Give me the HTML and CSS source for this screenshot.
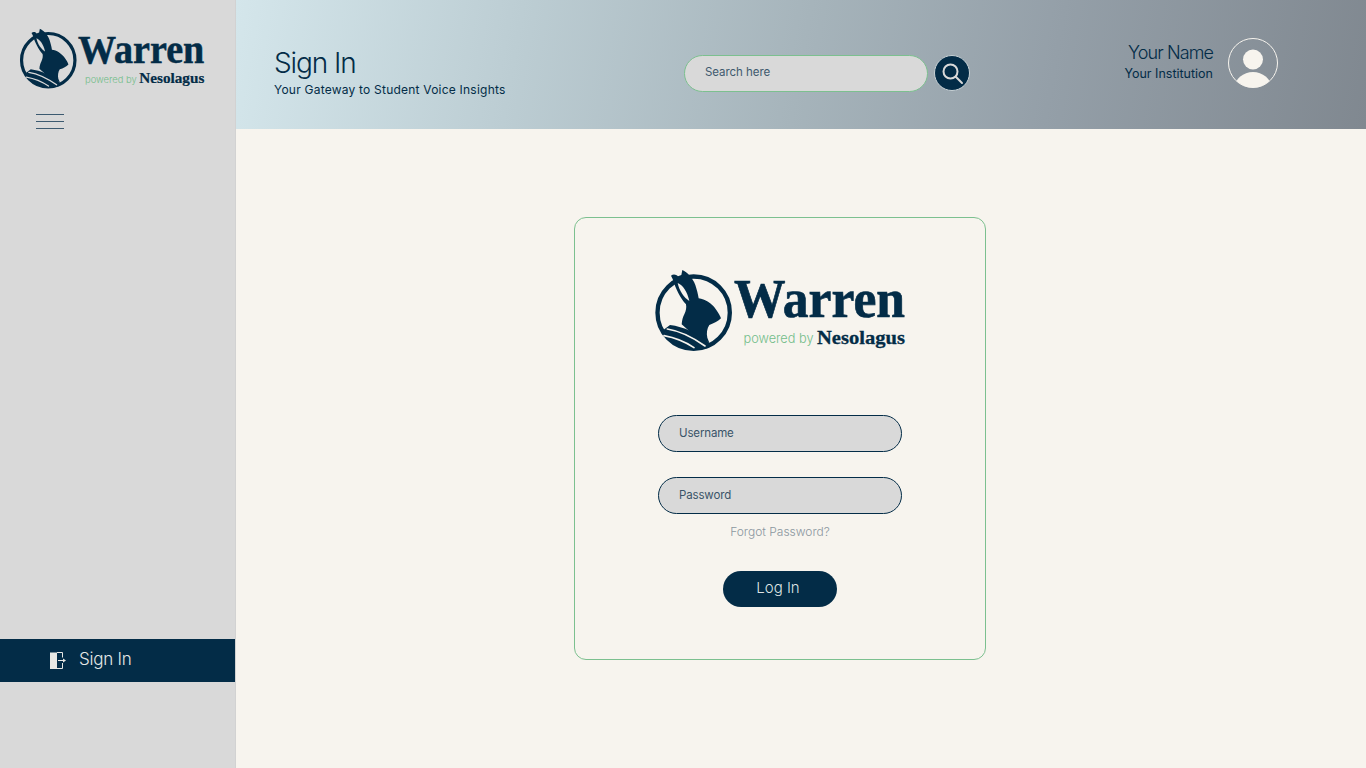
FILE: index.html
```html
<!DOCTYPE html>
<html lang="en">
<head>
<meta charset="utf-8">
<title>Warren - Sign In</title>
<link rel="stylesheet" href="styles.css">
</head>
<body>
<aside class="sidebar">
  <svg class="logo logo-small" viewBox="650 265 260 90" aria-label="Warren powered by Nesolagus">
    <g transform="translate(650 265) scale(.3333)">
      <circle class="ring" cx="131" cy="143" r="108.5"/>
      <path class="ink" d="M97 15 C112 22 128 38 136 60 C141 75 144 88 146 100 C165 102 185 115 197 132 C205 143 211 153 213 160 C205 168 192 175 178 180 C171 190 169 205 172 218 L178 233 L120 200 L95 178 C96 165 99 155 103 148 C108 138 110 128 108 118 C92 100 76 70 68 42 L63 32 C70 26 78 28 84 34 L94 30 Z"/>
      <path class="lens" d="M83 54 C98 60 112 80 118 108 C102 98 88 78 83 54 Z"/>
      <path class="ink" d="M60 180 C100 185 145 205 178 233 L172 250 L131 255 L80 240 C60 225 45 200 40 195 Z"/>
      <path class="gap" d="M52 192 C90 198 130 218 165 243"/>
      <path class="gap" d="M42 212 C75 218 105 230 132 248"/>
    </g>
    <text class="wordmark" x="734" y="317" textLength="171" lengthAdjust="spacingAndGlyphs">Warren</text>
    <text class="powered" x="743.5" y="343" textLength="70" lengthAdjust="spacingAndGlyphs">powered by</text>
    <text class="nesolagus" x="817" y="343.5" textLength="88" lengthAdjust="spacingAndGlyphs">Nesolagus</text>
  </svg>
  <div class="burger"><span></span><span></span><span></span></div>
  <a class="nav-item">
    <svg class="door" viewBox="0 0 16 17"><path class="door-fill" d="M0 .5 H7 V17 H0 Z"/><path class="door-line" d="M7 .5 H12.5 V5.5 M12.5 11 V16.5 H7 M8 8.5 H13"/><path class="door-fill" d="M13 6.5 L16 8.5 L13 10.5 Z"/></svg>
    <span>Sign In</span>
  </a>
</aside>
<div class="main">
  <header class="topbar">
    <div class="heading">
      <h1>Sign In</h1>
      <p>Your Gateway to Student Voice Insights</p>
    </div>
    <div class="search">
      <input class="search-input" placeholder="Search here">
      <button class="search-btn" aria-label="Search">
        <svg viewBox="0 0 24 24" width="24" height="24"><circle cx="10.5" cy="10.5" r="7"/><path d="M15.8 15.8 L22 22"/></svg>
      </button>
    </div>
    <div class="user">
      <div class="user-text">
        <div class="user-name">Your Name</div>
        <div class="user-inst">Your Institution</div>
      </div>
      <svg class="avatar" viewBox="0 0 50 52"><defs><clipPath id="av"><circle cx="25" cy="26" r="24.5"/></clipPath></defs><circle class="av-ring" cx="25" cy="26" r="24.5"/><g clip-path="url(#av)"><circle class="av-fill" cx="25" cy="22.5" r="10"/><ellipse class="av-fill" cx="25" cy="50" rx="18" ry="15"/></g></svg>
    </div>
  </header>
  <main class="content">
    <form class="card">
      <svg class="logo logo-large" viewBox="650 265 260 90" aria-label="Warren powered by Nesolagus">
        <g transform="translate(650 265) scale(.3333)">
          <circle class="ring" cx="131" cy="143" r="108.5"/>
          <path class="ink" d="M97 15 C112 22 128 38 136 60 C141 75 144 88 146 100 C165 102 185 115 197 132 C205 143 211 153 213 160 C205 168 192 175 178 180 C171 190 169 205 172 218 L178 233 L120 200 L95 178 C96 165 99 155 103 148 C108 138 110 128 108 118 C92 100 76 70 68 42 L63 32 C70 26 78 28 84 34 L94 30 Z"/>
          <path class="lens" d="M83 54 C98 60 112 80 118 108 C102 98 88 78 83 54 Z"/>
          <path class="ink" d="M60 180 C100 185 145 205 178 233 L172 250 L131 255 L80 240 C60 225 45 200 40 195 Z"/>
          <path class="gap" d="M52 192 C90 198 130 218 165 243"/>
          <path class="gap" d="M42 212 C75 218 105 230 132 248"/>
        </g>
        <text class="wordmark" x="734" y="317" textLength="171" lengthAdjust="spacingAndGlyphs">Warren</text>
        <text class="powered" x="743.5" y="343" textLength="70" lengthAdjust="spacingAndGlyphs">powered by</text>
        <text class="nesolagus" x="817" y="343.5" textLength="88" lengthAdjust="spacingAndGlyphs">Nesolagus</text>
      </svg>
      <input class="field field-user" placeholder="Username">
      <input class="field field-pass" placeholder="Password">
      <a class="forgot">Forgot Password?</a>
      <button class="login" type="button">Log In</button>
    </form>
  </main>
</div>
</body>
</html>
```

FILE: styles.css
```css
* { box-sizing: border-box; }
html, body { height: 100%; }
body {
  margin: 0;
  display: flex;
  height: 768px;
  overflow: hidden;
  background: #f7f4ee;
  color: #032c47;
  font-family: Inter, "Liberation Sans", sans-serif;
}
.sidebar {
  width: 236px;
  flex: none;
  background: #d9d9d9;
  border-right: 1px solid #d2d2d2;
  display: flex;
  flex-direction: column;
}
.logo { display: block; overflow: visible; --bg: #d9d9d9; }
.logo-small { width: 192px; height: 66.5px; margin: 25px 0 0 16px; }
.logo-large { width: 260px; height: 90px; margin: 47px 0 0 75px; --bg: #f7f4ee; align-self: flex-start; }
.ring { fill: none; stroke: #032c47; stroke-width: 13; }
.ink { fill: #032c47; }
.lens { fill: var(--bg); }
.gap { fill: none; stroke: var(--bg); stroke-width: 5; stroke-linecap: round; }
.wordmark { font-family: "Liberation Serif", serif; font-weight: 700; font-size: 54px; fill: #032c47; stroke: #032c47; stroke-width: .7; }
.powered { font-family: Inter, sans-serif; font-weight: 300; font-size: 13px; fill: #73bd8a; }
.nesolagus { font-family: "Liberation Serif", serif; font-weight: 700; font-size: 19px; fill: #032c47; stroke: #032c47; stroke-width: .3; }
.burger {
  display: flex;
  flex-direction: column;
  gap: 6px;
  width: 28px;
  margin: 22px 0 0 36px;
}
.burger span { height: 1px; background: #3c5a70; }
.nav-item {
  margin-top: auto;
  margin-bottom: 86px;
  height: 43px;
  width: 235px;
  background: #032c47;
  color: #e6e8e6;
  display: flex;
  align-items: center;
  padding-left: 50px;
  font-size: 17px;
  font-weight: 300;
  letter-spacing: -.25px;
}
.nav-item span { margin-top: -4px; }
.door { width: 16px; height: 17px; margin-right: 13px; }
.door-fill { fill: #e8e8e4; }
.door-line { stroke: #e8e8e4; stroke-width: 1; fill: none; }
.main { flex: 1; display: flex; flex-direction: column; min-width: 0; }
.topbar {
  height: 129px;
  flex: none;
  display: flex;
  align-items: flex-start;
  background: linear-gradient(100deg, #d4e6eb 0%, #bccdd3 25%, #a6b4bb 50%, #949fa8 72%, #808890 100%);
}
.heading { width: 448px; padding: 46px 0 0 38px; }
.heading h1 { margin: 0; font-size: 28px; font-weight: 300; line-height: 34px; color: #032c47; letter-spacing: -1.1px; }
.heading p { margin: 2px 0 0; font-size: 12px; line-height: 16px; font-weight: 400; letter-spacing: .22px; white-space: nowrap; }
.search { display: flex; gap: 6px; width: 442px; padding-top: 55px; }
.search-input {
  width: 244px;
  height: 37px;
  border: 1px solid #7cc08f;
  border-radius: 19px;
  background: #d9d9d9;
  padding: 0 20px 3px;
  font: 400 11.5px Inter, sans-serif;
  letter-spacing: -.05px;
  outline: none;
}
.search-input::placeholder { color: #3f5a6e; opacity: 1; }
.search-btn {
  width: 36px;
  height: 36px;
  padding: 0;
  border-radius: 50%;
  border: 1px solid #c9d2d6;
  background: #032c47;
  display: flex;
  align-items: center;
  justify-content: center;
}
.search-btn svg { fill: none; stroke: #d9d9d9; stroke-width: 2; stroke-linecap: round; }
.user { display: flex; gap: 15px; padding-top: 37px; margin-left: -33px; }
.user-text { width: 120px; text-align: right; padding-top: 5px; }
.user-name { font-size: 18px; font-weight: 300; line-height: 22px; white-space: nowrap; letter-spacing: -.9px; }
.user-inst { font-size: 12.5px; font-weight: 400; line-height: 20px; white-space: nowrap; }
.avatar { width: 50px; height: 52px; flex: none; }
.av-ring { fill: none; stroke: #f7f4ee; stroke-width: 1; }
.av-fill { fill: #f7f4ee; }
.content { flex: 1; padding: 88px 0 0 338px; }
.card {
  width: 412px;
  height: 443px;
  border: 1px solid #7cc08f;
  border-radius: 12px;
  display: flex;
  flex-direction: column;
  align-items: center;
}
.field {
  width: 244px;
  height: 37px;
  border: 1px solid #032c47;
  border-radius: 19px;
  background: #d9d9d9;
  padding: 0 20px 2px;
  font: 400 11.5px Inter, sans-serif;
  letter-spacing: -.15px;
  outline: none;
}
.field::placeholder { color: #3a5468; opacity: 1; }
.field-user { margin-top: 60px; }
.field-pass { margin-top: 25px; }
.forgot { margin-top: 9px; font-size: 12px; font-weight: 300; line-height: 17px; color: #8b979f; }
.login {
  margin-top: 31px;
  width: 114px;
  height: 36px;
  border: 0;
  border-radius: 18px;
  background: #032c47;
  color: #dfe4e4;
  font: 300 15px Inter, sans-serif;
  padding: 0 4px 3px 0;
}
```
